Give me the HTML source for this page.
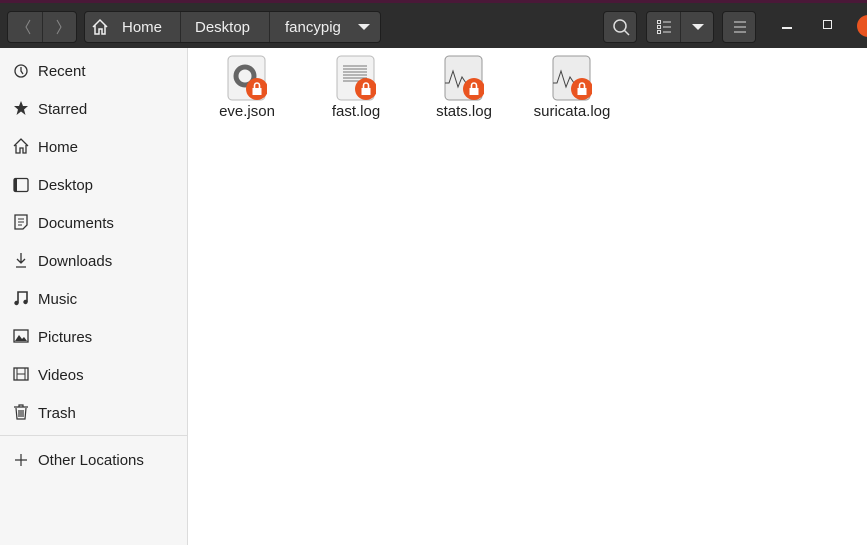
<!DOCTYPE html>
<html><head><style>
*{margin:0;padding:0;box-sizing:border-box}
body{width:867px;height:545px;overflow:hidden;font-family:"Liberation Sans",sans-serif;background:#fff;position:relative}
.hdr{position:absolute;left:0;top:0;width:867px;height:48px;background:#2d2d2d;border-top:3px solid #4a1838}
.btn{position:absolute;top:8px;height:32px;background:#444;border:1px solid #1e1e1e;border-radius:4px}
.sep{position:absolute;top:0;bottom:0;width:1px;background:#2a2a2a}
.t{position:absolute;top:7px;color:#eee;font-size:15px}
.side{position:absolute;left:0;top:48px;width:188px;height:497px;background:#f6f6f6;border-right:1px solid #dcdcdc}
.it{position:absolute;left:38px;font-size:15px;color:#222;margin-top:2px}
.ic{position:absolute;left:13px;margin-top:0}
.f{position:absolute;top:55px;width:40px;height:46px}
.fl{position:absolute;top:103px;font-size:15px;color:#222;text-align:center}
</style></head><body>
<div class="hdr">
 <div class="btn" style="left:7px;width:70px"><div class="sep" style="left:34px"></div>
  <svg style="position:absolute;left:0;top:0" width="70" height="30"><path d="M22 8 L18 15 L22 22" stroke="#888" fill="none"/><path d="M49 8 L53 15 L49 22" stroke="#888" fill="none"/></svg></div>
 <div class="btn" style="left:84px;width:297px">
  <svg style="position:absolute;left:6px;top:6px" width="18" height="18"><path d="M2 9 L9 2 L16 9 M4 7 V16 H8 V11 H11 V16 H14 V7" stroke="#eee" stroke-width="1.5" fill="none"/></svg>
  <span class="t" style="left:37px">Home</span><div class="sep" style="left:95px"></div>
  <span class="t" style="left:110px">Desktop</span><div class="sep" style="left:184px"></div>
  <span class="t" style="left:200px">fancypig</span>
  <svg style="position:absolute;left:273px;top:12px" width="12" height="8"><path d="M0 0 H12 L6 6Z" fill="#eee"/></svg></div>
 <div class="btn" style="left:603px;width:34px"><svg style="position:absolute;left:8px;top:6px" width="20" height="20"><circle cx="8" cy="8" r="6" stroke="#ddd" stroke-width="1.5" fill="none"/><path d="M12 12 L17 17" stroke="#ddd" stroke-width="1.5"/></svg></div>
 <div class="btn" style="left:646px;width:68px"><div class="sep" style="left:33px"></div>
  <svg style="position:absolute;left:9px;top:7px" width="16" height="16"><g fill="none" stroke="#ddd"><rect x="1.5" y="1.5" width="3" height="3"/><rect x="1.5" y="6.5" width="3" height="3"/><rect x="1.5" y="11.5" width="3" height="3"/></g><path d="M7 3H15M7 8H15M7 13H15" stroke="#ddd"/></svg>
  <svg style="position:absolute;left:45px;top:12px" width="12" height="8"><path d="M0 0 H12 L6 6Z" fill="#eee"/></svg></div>
 <div class="btn" style="left:722px;width:34px"><svg style="position:absolute;left:10px;top:8px" width="14" height="14"><path d="M1 2H13M1 7H13M1 12H13" stroke="#ddd"/></svg></div>
 <div style="position:absolute;left:782px;top:24px;width:10px;height:2px;background:#eee"></div>
 <div style="position:absolute;left:823px;top:17px;width:9px;height:9px;border:1.5px solid #eee"></div>
 <div style="position:absolute;left:857px;top:12px;width:22px;height:22px;border-radius:50%;background:#e95420"></div>
</div>
<div class="side">
 <svg class="ic" style="top:15px" width="16" height="16"><circle cx="8" cy="8" r="6" stroke="#333" stroke-width="1.3" fill="none"/><path d="M8 4V8L10 11" stroke="#333" stroke-width="1.3" fill="none"/></svg><span class="it" style="top:13px">Recent</span>
 <svg class="ic" style="top:52px" width="16" height="16"><path d="M8 1L10 6H15L11 9.5L12.5 15L8 11.5L3.5 15L5 9.5L1 6H6Z" fill="#333"/></svg><span class="it" style="top:51px">Starred</span>
 <svg class="ic" style="top:90px" width="16" height="16"><path d="M1 8L8 1L15 8M3 7V15H7V10H10V15H13V7" stroke="#333" stroke-width="1.3" fill="none"/></svg><span class="it" style="top:89px">Home</span>
 <svg class="ic" style="top:129px" width="16" height="16"><rect x="1" y="1.5" width="14" height="13" rx="1.5" stroke="#333" stroke-width="1.3" fill="none"/><rect x="1" y="1.5" width="3" height="13" fill="#333"/></svg><span class="it" style="top:127px">Desktop</span>
 <svg class="ic" style="top:166px" width="16" height="16"><path d="M2 1H14V11L10 15H2Z" stroke="#333" stroke-width="1.3" fill="none"/><path d="M5 5H11M5 8H11M5 11H9" stroke="#333"/></svg><span class="it" style="top:165px">Documents</span>
 <svg class="ic" style="top:204px" width="16" height="16"><path d="M8 1V11M4 7L8 11L12 7M3 15H13" stroke="#333" stroke-width="1.3" fill="none"/></svg><span class="it" style="top:203px">Downloads</span>
 <svg class="ic" style="top:242px" width="16" height="16"><path d="M5 13V2H14V12" stroke="#333" stroke-width="1.6" fill="none"/><circle cx="3.5" cy="13" r="2.2" fill="#333"/><circle cx="12.5" cy="12" r="2.2" fill="#333"/></svg><span class="it" style="top:241px">Music</span>
 <svg class="ic" style="top:280px" width="16" height="16"><rect x="1" y="2" width="14" height="12" stroke="#333" stroke-width="1.3" fill="none"/><path d="M2 13L6 7L9 11L11 9L14 13Z" fill="#333"/></svg><span class="it" style="top:279px">Pictures</span>
 <svg class="ic" style="top:318px" width="16" height="16"><rect x="1" y="2" width="14" height="12" stroke="#333" stroke-width="1.3" fill="none"/><path d="M4 2V14M12 2V14M4 8H12" stroke="#333"/></svg><span class="it" style="top:317px">Videos</span>
 <svg class="ic" style="top:355px" width="16" height="18"><path d="M1 4H15M6 4V2H10V4M3 5L4 16H12L13 5M6 7V14M8 7V14M10 7V14" stroke="#333" stroke-width="1.2" fill="none"/></svg><span class="it" style="top:355px">Trash</span>
 <div style="position:absolute;left:0;top:387px;width:187px;height:1px;background:#dcdcdc"></div>
 <svg class="ic" style="top:404px" width="16" height="16"><path d="M8 2V14M2 8H14" stroke="#333" stroke-width="1.2"/></svg><span class="it" style="top:402px">Other Locations</span>
</div>
<svg class="f" style="left:227px" viewBox="0 0 40 46"><rect x="1" y="1" width="37" height="44" rx="4" fill="#f2f2f2" stroke="#bbb"/><circle cx="18" cy="21" r="9" fill="none" stroke="#666" stroke-width="5"/><circle cx="30" cy="34" r="11" fill="#e95420"/><rect x="25.5" y="33" width="9" height="7" fill="#fff"/><path d="M27.5 33V30.5A2.5 2.5 0 0 1 32.5 30.5V33" stroke="#fff" stroke-width="1.6" fill="none"/></svg>
<svg class="f" style="left:336px" viewBox="0 0 40 46"><rect x="1" y="1" width="37" height="44" rx="4" fill="#f2f2f2" stroke="#bbb"/><path d="M7 11H31M7 14H31M7 17H31M7 20H31M7 23H31M7 26H26" stroke="#777"/><circle cx="30" cy="34" r="11" fill="#e95420"/><rect x="25.5" y="33" width="9" height="7" fill="#fff"/><path d="M27.5 33V30.5A2.5 2.5 0 0 1 32.5 30.5V33" stroke="#fff" stroke-width="1.6" fill="none"/></svg>
<svg class="f" style="left:444px" viewBox="0 0 40 46"><rect x="1" y="1" width="37" height="44" rx="4" fill="#ececec" stroke="#999"/><path d="M1 28H5L9 16L14 32L18 22L22 28" stroke="#444" fill="none"/><circle cx="30" cy="34" r="11" fill="#e95420"/><rect x="25.5" y="33" width="9" height="7" fill="#fff"/><path d="M27.5 33V30.5A2.5 2.5 0 0 1 32.5 30.5V33" stroke="#fff" stroke-width="1.6" fill="none"/></svg>
<svg class="f" style="left:552px" viewBox="0 0 40 46"><rect x="1" y="1" width="37" height="44" rx="4" fill="#ececec" stroke="#999"/><path d="M1 28H5L9 16L14 32L18 22L22 28" stroke="#444" fill="none"/><circle cx="30" cy="34" r="11" fill="#e95420"/><rect x="25.5" y="33" width="9" height="7" fill="#fff"/><path d="M27.5 33V30.5A2.5 2.5 0 0 1 32.5 30.5V33" stroke="#fff" stroke-width="1.6" fill="none"/></svg>
<div class="fl" style="left:207px;width:80px">eve.json</div>
<div class="fl" style="left:316px;width:80px">fast.log</div>
<div class="fl" style="left:424px;width:80px">stats.log</div>
<div class="fl" style="left:522px;width:100px">suricata.log</div>
</body></html>
